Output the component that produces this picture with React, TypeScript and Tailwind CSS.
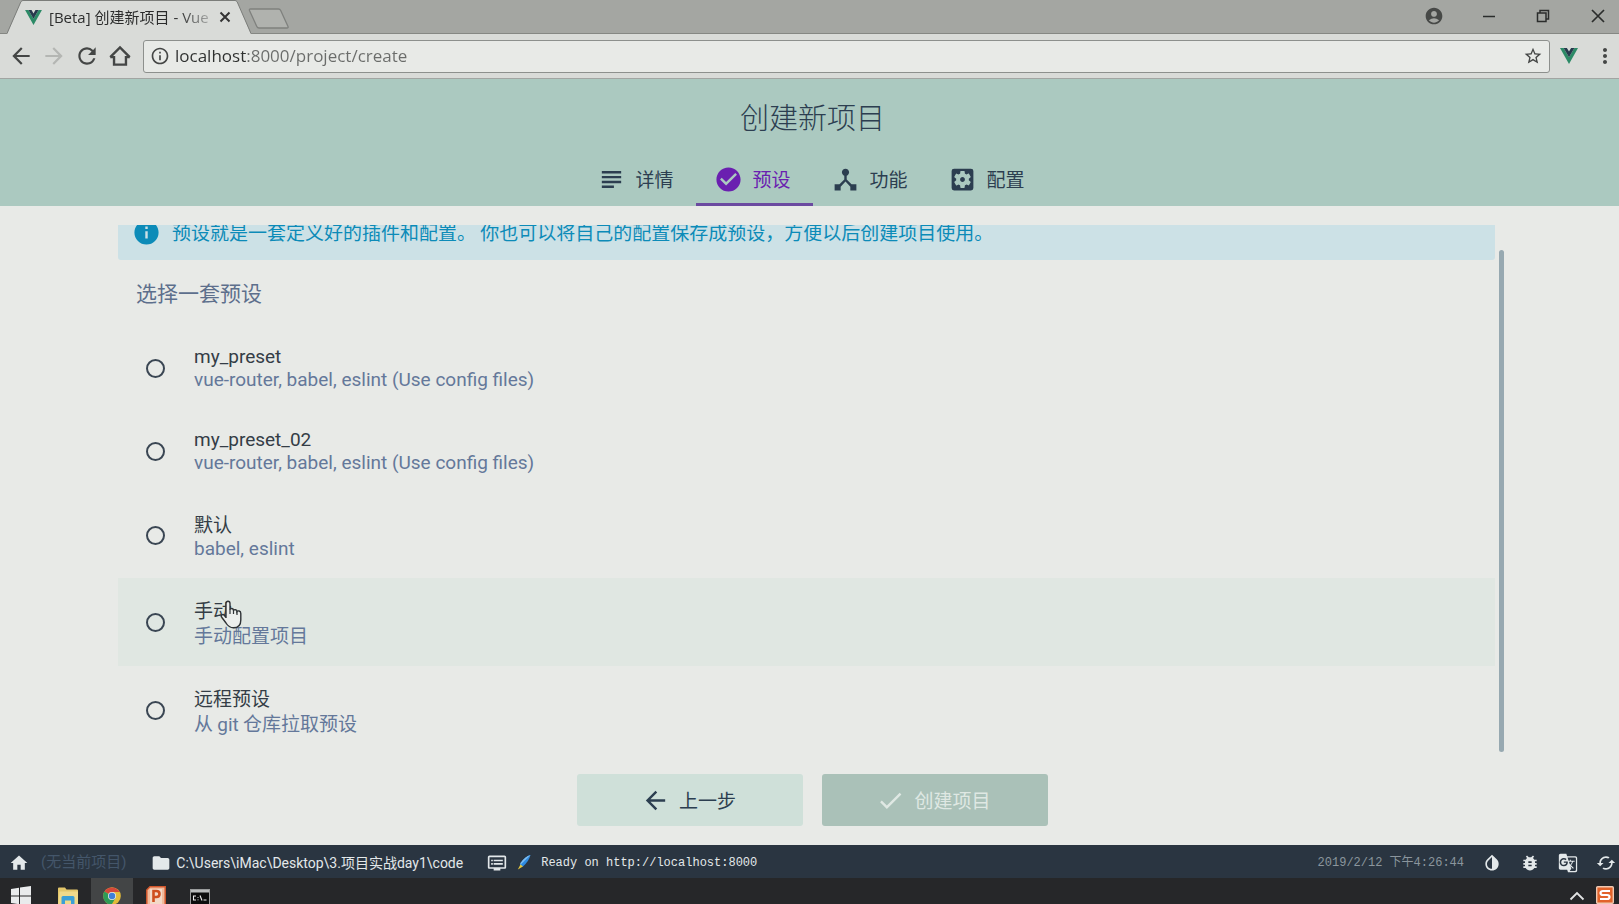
import { useState } from "react"
import {
  MdAccountCircle,
  MdArrowBack,
  MdArrowForward,
  MdBugReport,
  MdCached,
  MdCheckCircle,
  MdDeviceHub,
  MdDone,
  MdDvr,
  MdFolder,
  MdGTranslate,
  MdHome,
  MdInfo,
  MdInfoOutline,
  MdInvertColors,
  MdMoreVert,
  MdRefresh,
  MdSettingsApplications,
  MdStarBorder,
  MdSubject,
} from "react-icons/md"

const STEPS = [
  { id: "details", label: "详情", icon: MdSubject },
  { id: "presets", label: "预设", icon: MdCheckCircle },
  { id: "features", label: "功能", icon: MdDeviceHub },
  { id: "config", label: "配置", icon: MdSettingsApplications },
]

const CJK = "font-['Noto_Sans_CJK_SC',sans-serif]"

const PRESETS = [
  { id: "my_preset", name: "my_preset", info: "vue-router, babel, eslint (Use config files)" },
  { id: "my_preset_02", name: "my_preset_02", info: "vue-router, babel, eslint (Use config files)" },
  { id: "default", name: "默认", info: "babel, eslint", cjkName: true },
  { id: "manual", name: "手动", info: "手动配置项目", cjkName: true, cjkInfo: true, hover: true },
  {
    id: "remote",
    name: "远程预设",
    info: (
      <>
        从 <span className="font-[Roboto] leading-none">git</span> 仓库拉取预设
      </>
    ),
    cjkName: true,
    cjkInfo: true,
  },
]

const TOOLS = [
  { label: "Toggle dark mode", icon: MdInvertColors },
  { label: "Report a bug", icon: MdBugReport },
  { label: "Translate", icon: MdGTranslate },
  { label: "Refresh", icon: MdCached },
]

function VueLogo({ className }: { className?: string }) {
  return (
    <svg viewBox="0 0 18 16" className={className} aria-hidden="true">
      <path d="M0 0h3.6L9 9.2 14.4 0H18L9 16z" fill="#2c8a66" />
      <path d="M3.6 0h3.3L9 3.6 11.1 0h3.3L9 9.2z" fill="#273a4d" />
    </svg>
  )
}

function TabStrip() {
  return (
    <div className="flex h-[34px] shrink-0 items-start border-b border-[#858783] bg-[#a4a6a2]">
      <div className="relative ml-[7px] flex h-[34px] w-[244px] items-center pl-[18px]">
        <svg viewBox="0 0 244 34" className="absolute inset-0 h-full w-full" aria-hidden="true">
          <path d="M0 34 L14 1.5 Q15 .5 16 .5 H228 Q229 .5 230 1.5 L244 34 Z" fill="#d9dbd8" />
          <path d="M0 33.5 L14 1.5 Q15 .5 16 .5 H228 Q229 .5 230 1.5 L244 33.5" fill="none" stroke="#7b7d7a" />
        </svg>
        <VueLogo className="relative h-[15px] w-[17px]" />
        <span className="relative ml-[7px] w-[160px] overflow-hidden bg-[linear-gradient(90deg,#2a2b2b_130px,#b0b2b0_162px)] bg-clip-text font-['Open_Sans','Noto_Sans_CJK_SC',sans-serif] text-[15px] whitespace-nowrap text-transparent">
          [Beta] 创建新项目 - Vue
        </span>
        <button aria-label="Close tab" className="relative ml-[10px]">
          <svg viewBox="0 0 12 12" className="h-3 w-3" aria-hidden="true">
            <path d="M1.5 1.5l9 9M10.5 1.5l-9 9" stroke="#333" strokeWidth="2" />
          </svg>
        </button>
      </div>
      <button aria-label="New tab" className="-ml-[3px] mt-2">
        <svg viewBox="0 0 42 21" className="h-[21px] w-[42px]" aria-hidden="true">
          <path
            d="M2.5 1h28q1.5 0 2.2 1.5l7.3 16q.5 1.5-1 1.5H11q-1.500 0-2.200-1.500L1.500 2.500Q1 1 2.500 1z"
            fill="#b0b2ae"
            stroke="#7f817e"
            strokeWidth="1.300"
          />
        </svg>
      </button>
      <div className="ml-auto flex h-[31px] items-center pr-[14px] text-[#2b2d2c]">
        <button aria-label="Profile" className="text-[#474947]">
          <MdAccountCircle size={20} />
        </button>
        <button aria-label="Minimize" className="ml-[38px]">
          <svg viewBox="0 0 14 14" className="h-3.5 w-3.5" aria-hidden="true">
            <path d="M1 7.500h12" stroke="currentColor" strokeWidth="1.500" />
          </svg>
        </button>
        <button aria-label="Restore" className="ml-10">
          <svg viewBox="0 0 14 14" className="h-3.5 w-3.5" fill="none" stroke="currentColor" strokeWidth="1.500" aria-hidden="true">
            <path d="M1.500 4h8.500v8.500H1.500zM4 4V1.500h8.500V10H10" />
          </svg>
        </button>
        <button aria-label="Close window" className="ml-[41px]">
          <svg viewBox="0 0 14 14" className="h-3.5 w-3.5" aria-hidden="true">
            <path d="M1 1l12 12M13 1L1 13" stroke="currentColor" strokeWidth="1.700" />
          </svg>
        </button>
      </div>
    </div>
  )
}

function Toolbar() {
  const [url, setUrl] = useState("localhost:8000/project/create")

  return (
    <div className="flex h-[45px] shrink-0 items-center border-b border-[#a2a5a2] bg-[#d9dbd8] pr-[2px] pl-2 text-[#444645]">
      <div className="flex shrink-0 items-center gap-[7px]">
        <button aria-label="Back">
          <MdArrowBack size={26} />
        </button>
        <button aria-label="Forward" className="text-[#b4b6b3]" disabled>
          <MdArrowForward size={26} />
        </button>
        <button aria-label="Reload">
          <MdRefresh size={26} />
        </button>
        <button aria-label="Home page">
          <svg viewBox="0 0 24 24" className="h-[26px] w-[26px]" fill="none" stroke="currentColor" strokeWidth="2.200" aria-hidden="true">
            <path d="M3 13L12 4l9 9M3 13h3.500v7h11v-7H21" />
          </svg>
        </button>
      </div>
      <div className="ml-[10px] flex h-[33px] min-w-0 flex-1 items-center rounded-[3px] border border-[#8d908d] bg-[#e8eae7] pr-1.5 pl-1.5">
        <MdInfoOutline size={20} className="shrink-0" />
        <input
          aria-label="Address"
          value={url}
          onChange={(e) => setUrl(e.target.value)}
          className="ml-[5px] min-w-0 flex-1 bg-[linear-gradient(90deg,#2e302f_72px,#6a6c6a_72px)] bg-clip-text font-['Open_Sans',sans-serif] text-[17px] text-transparent outline-none"
        />
        <button aria-label="Bookmark">
          <MdStarBorder size={20} />
        </button>
      </div>
      <button aria-label="Vue devtools" className="ml-2.5">
        <VueLogo className="h-4 w-[18px]" />
      </button>
      <button aria-label="Menu" className="ml-[15px]">
        <MdMoreVert size={24} />
      </button>
    </div>
  )
}

function Header() {
  return (
    <header className={`${CJK} flex h-[127px] shrink-0 flex-col items-center bg-[#abc9c0] pl-1.5 text-[#2c3e50]`}>
      <h1 className="mt-[17px] text-[29px] leading-10 font-light">创建新项目</h1>
      <nav className="mt-auto flex">
        {STEPS.map((step) => {
          const Icon = step.icon
          const active = step.id === "presets"
          return (
            <button
              key={step.id}
              className={`flex h-[50px] w-[117px] items-center justify-center gap-[9px] border-b-[3px] pr-[3px] text-[19px] ${
                active ? "border-[#6b4aa0] text-[#6a1fb0]" : "border-transparent"
              }`}
            >
              <Icon size={29} />
              {step.label}
            </button>
          )
        })}
      </nav>
    </header>
  )
}

function HandCursor() {
  return (
    <svg viewBox="0 0 22 29" className="pointer-events-none absolute top-[22px] left-[102px] h-[29px] w-[22px]" aria-hidden="true">
      <path
        d="M6 18V3.500C6 .5 10 .5 10 3.500V9.500C10.500 8 13.500 8 13.500 10.500C14 9.200 17 9.300 17 11.500C17.600 10.500 20.800 10.500 20.800 13.500V20C20.800 25 18 27.800 13.500 27.800C9.500 27.800 7.800 26 6 23L1.500 17C.5 15 3 13.600 4.500 15.500L6 17.500"
        fill="#eceeec"
        stroke="#2f3336"
        strokeWidth="1.400"
      />
      <path d="M10 9v5M13.500 10v4M17 11v4" stroke="#2f3336" strokeWidth="1.200" />
    </svg>
  )
}

function PresetList() {
  const [selected, setSelected] = useState("")

  return (
    <fieldset className="min-w-0">
      <legend className={`${CJK} flex h-[66px] items-center pl-[18px] text-[21px] text-[#5d6f8c]`}>选择一套预设</legend>
      {PRESETS.map((preset) => (
        <label
          key={preset.id}
          className={`relative flex items-center gap-[29px] pt-[19px] pl-7 text-[19px] ${
            preset.cjkInfo ? "pb-[19px]" : "pb-[18px]"
          } ${preset.hover ? "bg-[#e0e7e2]" : ""}`}
        >
          <input
            type="radio"
            name="preset"
            checked={selected === preset.id}
            onChange={() => setSelected(preset.id)}
            className="h-[19px] w-[19px] appearance-none rounded-full border-2 border-[#3a4653] checked:border-[6px]"
          />
          <span className="flex flex-col">
            <span
              className={`text-[#343d46] ${preset.cjkName ? CJK : ""} ${
                preset.cjkInfo ? "leading-[25px]" : preset.cjkName ? "leading-[26px]" : "leading-[23px]"
              }`}
            >
              {preset.name}
            </span>
            <span className={`text-[#64789a] ${preset.cjkInfo ? `${CJK} leading-[25px]` : "leading-[23px]"}`}>
              {preset.info}
            </span>
          </span>
          {preset.hover && <HandCursor />}
        </label>
      ))}
    </fieldset>
  )
}

function StatusBar() {
  return (
    <footer className="flex h-[33px] shrink-0 items-center bg-[#2a3541] pt-[2px] text-[#e3e8ea]">
      <button aria-label="Home" className="ml-[9px]">
        <MdHome size={20} />
      </button>
      <span className="ml-3 text-[15px] text-[#44566a]">(无当前项目)</span>
      <button className="ml-[25px] flex items-center gap-[5px] text-sm">
        <MdFolder size={20} />
        C:\Users\iMac\Desktop\3.项目实战day1\code
      </button>
      <button className="ml-6 flex items-center font-['Liberation_Mono','Noto_Sans_CJK_SC',monospace] text-xs">
        <MdDvr size={20} />
        <svg viewBox="0 0 14 15" className="ml-2.5 h-[15px] w-3.5" aria-hidden="true">
          <path d="M13.500 0Q8 1.500 3.500 8L3 11l3 .5Q12 6 13.500 0z" fill="#2f8be0" />
          <path d="M13.500 0Q8 1.500 3.500 8L3.200 10z" fill="#7fbdf0" />
          <path d="M3.500 9.500L.8 14.500 6 11.500z" fill="#e6c63c" />
        </svg>
        <span className="ml-2.5">Ready on http://localhost:8000</span>
      </button>
      <time className="ml-auto font-['Liberation_Mono','Noto_Sans_CJK_SC',monospace] text-xs text-[#8b959d]">
        2019/2/12 下午4:26:44
      </time>
      <div className="ml-[18px] flex gap-[18px] pr-[3px]">
        {TOOLS.map((tool) => {
          const Icon = tool.icon
          return (
            <button key={tool.label} aria-label={tool.label}>
              <Icon size={20} />
            </button>
          )
        })}
      </div>
    </footer>
  )
}

function Taskbar() {
  return (
    <div className="flex h-[26px] shrink-0 items-start overflow-hidden bg-[#262729]">
      <button aria-label="Start" className="ml-[11px] pt-2">
        <svg viewBox="0 0 20 20" className="h-5 w-5" fill="#e9ebec" aria-hidden="true">
          <path d="M0 3l8-1.200V9.500H0zM9 1.600L20 0v9.500H9zM0 10.500h8v7.700L0 17zM9 10.500h11V20L9 18.400z" />
        </svg>
      </button>
      <button aria-label="File Explorer" className="ml-[27px] pt-[9px]">
        <svg viewBox="0 0 20 18" className="h-[18px] w-5" aria-hidden="true">
          <path d="M0 1.500Q0 .5 1 .5h6l1.500 2H19q1 0 1 1V18H0z" fill="#e3c66a" />
          <path d="M1.500 4.500H20V18H0z" fill="#f0d98a" />
          <path d="M3.500 18v-7.500q0-1.500 1.500-1.500h10q1.500 0 1.500 1.500V18h-3.500v-4.500h-6V18z" fill="#3b9fd6" />
        </svg>
      </button>
      <button aria-label="Chrome" className="ml-[13px] h-[26px] w-[42px] bg-[#434546] pt-[9px] pl-3">
        <svg viewBox="0 0 18 18" className="h-[18px] w-[18px]" aria-hidden="true">
          <circle cx="9" cy="9" r="8.800" fill="#e3bb3a" />
          <path d="M9 9L1.400 4.600A8.800 8.800 0 0 1 16.600 5H9z" fill="#d5483a" />
          <path d="M1.400 4.600A8.800 8.800 0 0 0 8.500 17.800L12.500 11z" fill="#2f9b57" />
          <circle cx="9" cy="9" r="4" fill="#e8e9e8" />
          <circle cx="9" cy="9" r="3.200" fill="#3f7fd8" />
        </svg>
      </button>
      <button aria-label="PowerPoint" className="ml-[13px] pt-2">
        <svg viewBox="0 0 20 20" className="h-5 w-5" aria-hidden="true">
          <path d="M4 .8h15.200v18.500H.8V4z" fill="#f0bb9c" stroke="#d2572c" strokeWidth="1.500" />
          <rect x="4" y="3" width="12" height="16" fill="#f3d9c8" />
          <path d="M7.500 16V5h3q3 0 3 3t-3 3h-3" fill="none" stroke="#cf4f1f" strokeWidth="2.600" />
        </svg>
      </button>
      <button aria-label="Command Prompt" className="ml-6 pt-[11px]">
        <svg viewBox="0 0 20 16" className="h-4 w-5" aria-hidden="true">
          <rect x=".5" y=".5" width="19" height="15.500" fill="#0c0d0d" stroke="#9a9c9c" />
          <path d="M1 1h18v2.500H1z" fill="#b9bcbc" />
          <path d="M6 7H3.500v4H6M8 8v.8M8 10.500v.8M10 6.500l2 5M13.500 11h3" fill="none" stroke="#eee" strokeWidth="1.100" />
        </svg>
      </button>
      <button aria-label="Show hidden icons" className="ml-auto pt-[13px]">
        <svg viewBox="0 0 16 10" className="h-2.5 w-4" fill="none" stroke="#e2e4e4" strokeWidth="1.800" aria-hidden="true">
          <path d="M1.500 8.500L8 2l6.500 6.500" />
        </svg>
      </button>
      <button aria-label="Input method" className="mr-[5px] ml-[11px] pt-2">
        <svg viewBox="0 0 18 18" className="h-[18px] w-[18px]" aria-hidden="true">
          <rect x=".7" y=".7" width="16.600" height="16.600" rx="1" fill="#e2632a" stroke="#f0c9b2" strokeWidth="1.400" />
          <path d="M14 5H7Q4.500 5 4.500 7T7 9h4q2.500 0 2.500 2T11 13H4" fill="none" stroke="#fff" strokeWidth="2.200" />
        </svg>
      </button>
    </div>
  )
}

export default function App() {
  return (
    <div className="flex h-screen flex-col overflow-hidden bg-[#e8eae7] font-[Roboto,'Noto_Sans_CJK_SC',sans-serif]">
      <TabStrip />
      <Toolbar />
      <Header />

      <main className="flex min-h-0 flex-1 flex-col pt-[19px]">
        {/* Scrolled a little, so the banner is cut by the top edge */}
        <div className="flex min-h-0 flex-1 overflow-hidden pr-[115px] pl-[118px]">
          <div className="min-w-0 flex-1">
            <div className={`${CJK} -mt-[21px] flex h-14 items-center gap-[11px] rounded-[3px] bg-[#cce1e6] pl-[14px] text-[19px] text-[#0c8bb8]`}>
              <MdInfo size={29} className="shrink-0" />
              <p>预设就是一套定义好的插件和配置。 你也可以将自己的配置保存成预设，方便以后创建项目使用。</p>
            </div>
            <PresetList />
          </div>
          <div className="mt-[25px] mb-[3px] ml-1 w-[5px] shrink-0 rounded-full bg-[#97a9b1]" />
        </div>

        <div className={`${CJK} flex shrink-0 justify-center gap-[19px] pt-[19px] pb-[19px] pl-1.5 text-[19px]`}>
          <button className="flex h-[52px] w-[226px] items-center justify-center gap-[9px] rounded-[3px] bg-[#cfe0d9] pr-[3px] text-[#2c3e50]">
            <MdArrowBack size={29} />
            上一步
          </button>
          <button
            disabled
            className="flex h-[52px] w-[226px] items-center justify-center gap-[9px] rounded-[3px] bg-[#aac1b8] pr-[3px] text-[#dfe8e3]"
          >
            <MdDone size={29} />
            创建项目
          </button>
        </div>
      </main>

      <StatusBar />
      <Taskbar />
    </div>
  )
}
